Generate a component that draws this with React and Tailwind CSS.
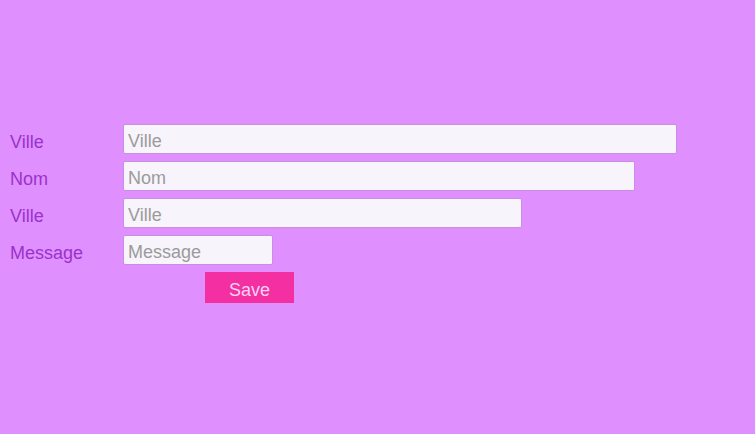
import React from 'react'

const fields = [
  { label: 'Ville', width: 'w-[554px]' },
  { label: 'Nom', width: 'w-[512px]' },
  { label: 'Ville', width: 'w-[399px]' },
  { label: 'Message', width: 'w-[150px]' },
]

export default function App() {
  return (
    <div className="min-h-[434px] w-full bg-[#e08ffe] pt-[124px] font-['Liberation_Sans',Arial,sans-serif]">
      <form className="flex flex-col gap-[7px]" onSubmit={(e) => e.preventDefault()}>
        {fields.map((f, i) => (
          <div key={i} className="flex h-[30px] items-center">
            <label className="w-[123px] pl-[10px] pt-[6px] text-[18px] leading-[24px] text-[#9a32cc]">{f.label}</label>
            <input
              placeholder={f.label}
              className={`${f.width} h-[30px] rounded-[2px] border border-[#c98ee0] bg-[#f8f4fc] px-[4px] pt-[5px] text-[18px] text-gray-700 placeholder:text-[#9b9b9b] outline-none`}
            />
          </div>
        ))}
        <div className="flex pl-[205px]">
          <button className="h-[31px] w-[89px] bg-[#f32fa1] pt-[4px] text-[18px] leading-[24px] text-[#fad3f2]">Save</button>
        </div>
      </form>
    </div>
  )
}
